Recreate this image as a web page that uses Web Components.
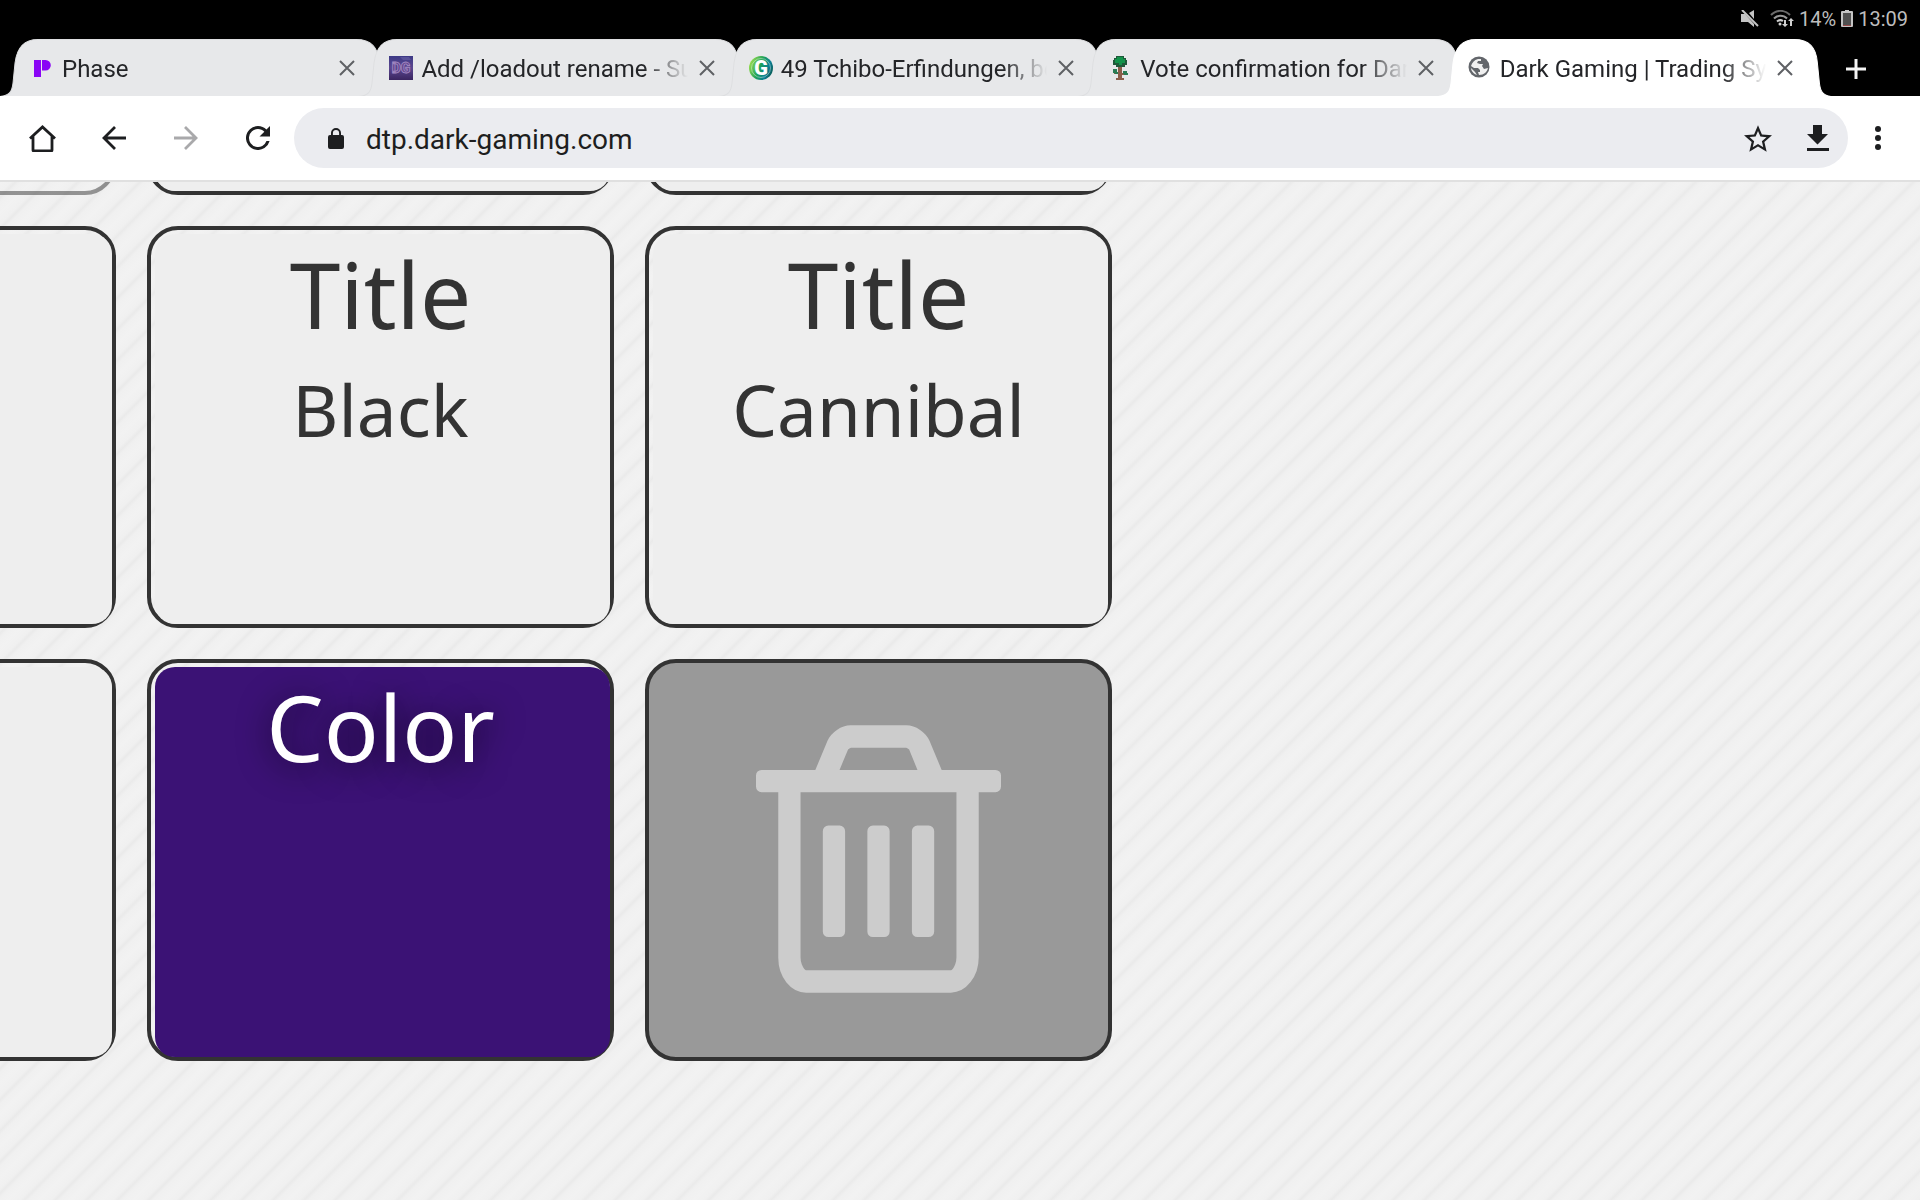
<!DOCTYPE html>
<html lang="en">
<head>
<meta charset="utf-8">
<title>Dark Gaming | Trading System</title>
<style>
  html, body {
    height: 100%;
    margin: 0;
  }

  body {
    display: flex;
    flex-direction: column;
    overflow: hidden;
    font-family: Roboto, "Liberation Sans", sans-serif;
    background: #000;
  }

  trade-board {
    flex: 1;
    min-height: 0;
  }
</style>
</head>
<body>
  <status-bar battery="14%" time="13:09"></status-bar>

  <tab-strip>
    <browser-tab label="Phase" icon="phase"></browser-tab>
    <browser-tab label="Add /loadout rename - Su" icon="dg"></browser-tab>
    <browser-tab label="49 Tchibo-Erfindungen, be" icon="g"></browser-tab>
    <browser-tab label="Vote confirmation for Dar" icon="tree"></browser-tab>
    <browser-tab label="Dark Gaming | Trading Sy" icon="globe" active></browser-tab>
  </tab-strip>

  <address-bar url="dtp.dark-gaming.com"></address-bar>

  <trade-board>
    <trade-card variant="faded"></trade-card>
    <trade-card></trade-card>
    <trade-card></trade-card>
    <trade-card><h2 slot="title">Title</h2><p slot="value">Saffron</p></trade-card>
    <trade-card><h2 slot="title">Title</h2><p slot="value">Black</p></trade-card>
    <trade-card><h2 slot="title">Title</h2><p slot="value">Cannibal</p></trade-card>
    <trade-card></trade-card>
    <trade-card variant="color" style="--fill: #3b1275"><h2 slot="title">Color</h2></trade-card>
    <trash-card></trash-card>
  </trade-board>

<script>
const ICONS = {
  phase: `<svg viewBox="0 0 24 24" width="24" height="24"><path fill="#8a05f5" d="M4 4h7v17H4zM12 4h3.500a5.300 5.300 0 0 1 0 10.600H12z"/></svg>`,
  dg: `<svg viewBox="0 0 24 24" width="24" height="24">
    <defs><linearGradient id="sky" x2="0" y2="1"><stop offset="0" stop-color="#3d3a86"/><stop offset=".5" stop-color="#5b478f"/><stop offset="1" stop-color="#3a2560"/></linearGradient></defs>
    <path fill="url(#sky)" d="M0 0h24v24H0z"/><path fill="#6e68ac" opacity=".5" d="M11 1h9l2 3h-8z"/>
    <text x="12" y="17" text-anchor="middle" font-family="Roboto, sans-serif" font-weight="900" font-size="14" fill="#63468f" stroke="#a58cc4" stroke-width=".8">DG</text></svg>`,
  g: `<svg viewBox="0 0 24 24" width="24" height="24">
    <defs><linearGradient id="ring" x1="0" y1=".3" x2="1" y2=".7"><stop offset="0" stop-color="#9be04e"/><stop offset=".45" stop-color="#1ea05a"/><stop offset=".75" stop-color="#0b7f96"/><stop offset="1" stop-color="#0a5a50"/></linearGradient></defs>
    <circle cx="12" cy="12" r="12" fill="url(#ring)"/><circle cx="12" cy="12" r="9.500" fill="none" stroke="#fff" stroke-opacity=".4"/>
    <text x="12" y="19" text-anchor="middle" font-family="Roboto, sans-serif" font-weight="900" font-size="20" fill="#fff">G</text></svg>`,
  tree: `<svg viewBox="0 0 24 24" width="24" height="24">
    <path fill="#8b5e4a" d="M10 11h4v11h2v2H8v-2h2zM6 16h4v2H6zM14 17h4v2h-4z"/>
    <path fill="#1f5a3a" d="M8 0h8v2h2v2h1v5h-2v2H8V9H5V4h1V2h2z"/><path fill="#13934a" d="M9 1h6v2h2v4h-3v2h-3V7H7V3h2z"/>
    <path fill="#2a7d55" d="M5 13h4v3h1v2H7v-1H5zM15 15h4v2h1v2h-4v-1h-1z"/></svg>`,
  globe: `<svg viewBox="0 0 24 24" width="24" height="24">
    <circle cx="11" cy="11" r="10.500" fill="#63666b"/>
    <path fill="#fff" d="M10 3c-4 1-6 4-7 7l3 2h4l2 2v2h-2l1 3c5 0 8-3 9-7l-4 1-2-3 1-2h-3l-3-1 1-2h3V3zM3 12l4 4 2 3c-3-1-6-4-6-7z" opacity=".9"/></svg>`,
  close: `<svg viewBox="0 0 24 24" width="24" height="24"><path d="M5 4l14 14M19 4L5 18" stroke="#5f6165" stroke-width="2" fill="none"/></svg>`,
  plus: `<svg viewBox="0 0 24 24" width="24" height="24"><path d="M12 2v20M2 12h20" stroke="#f4f4f4" stroke-width="3" fill="none"/></svg>`,
  home: `<svg viewBox="0 0 28 28" width="28" height="28"><path d="M2 14.500L14.500 3 27 14.500M5 12v14q0 1 1 1h17q1 0 1-1V12" stroke="#1d1e20" stroke-width="2.800" fill="none"/></svg>`,
  back: `<svg viewBox="0 0 28 28" width="28" height="28"><path d="M26 14H4M15 3L4 14l11 11" stroke="#1d1e20" stroke-width="2.800" fill="none"/></svg>`,
  forward: `<svg viewBox="0 0 28 28" width="28" height="28"><path d="M2 14h22M13 3l11 11-11 11" stroke="#a9a9ab" stroke-width="2.800" fill="none"/></svg>`,
  reload: `<svg viewBox="0 0 16 16" width="24" height="24"><path fill="#1d1e20" d="M13.650 2.350A7.960 7.960 0 0 0 8 0a8 8 0 1 0 7.730 10h-2.080A6 6 0 1 1 8 2c1.660 0 3.140.690 4.220 1.780L9 7h7V0z"/></svg>`,
  lock: `<svg viewBox="0 0 16 21" width="16" height="21"><path fill="#1d1e20" d="M14 7h-1V5A5 5 0 0 0 3 5v2H2a2 2 0 0 0-2 2v10a2 2 0 0 0 2 2h12a2 2 0 0 0 2-2V9a2 2 0 0 0-2-2zM4.900 7V5a3.100 3.100 0 0 1 6.200 0v2z"/></svg>`,
  star: `<svg viewBox="2 2 20 19" width="28" height="27"><path fill="#1d1e20" d="M22 9.240l-7.190-.620L12 2 9.190 8.630 2 9.240l5.460 4.730L5.820 21 12 17.270 18.180 21l-1.630-7.030zM12 15.400l-3.760 2.270 1-4.280-3.320-2.880 4.380-.380L12 6.100l1.710 4.040 4.380.380-3.320 2.880 1 4.280z"/></svg>`,
  download: `<svg viewBox="0 0 22 26" width="22" height="26"><path fill="#1d1e20" d="M6 0h9v9h6L10.500 19.500 0 9h6zM0 23h22v3H0z"/></svg>`,
  menu: `<svg viewBox="0 0 6 24" width="6" height="24"><g fill="#1d1e20"><circle cx="3" cy="3" r="3"/><circle cx="3" cy="12" r="3"/><circle cx="3" cy="21" r="3"/></g></svg>`,
  mute: `<svg viewBox="0 0 18 18" width="18" height="18"><path fill="#c4c4c4" d="M0 4h4l9 10v3l-6-5H0zM8 3l5-3v9z"/><path d="M1 0l16 16" stroke="#c4c4c4" stroke-width="2"/></svg>`,
  wifi: `<svg viewBox="0 0 24 18" width="24" height="18"><g fill="none" stroke-width="2"><path stroke="#6b6b6b" d="M1 5a13 13 0 0 1 19 0"/><path stroke="#9a9a9a" d="M4 8.500a9 9 0 0 1 13 0"/><path stroke="#d0d0d0" d="M7 11.500a5 5 0 0 1 6-.500"/></g><circle cx="10" cy="14" r="1.500" fill="#d0d0d0"/><path fill="#d0d0d0" d="M14 10h2v4h2l-3 3-3-3h2zM20 16v-5h-2l3-3 3 3h-2v5z"/></svg>`,
  battery: `<svg viewBox="0 0 12 18" width="12" height="18"><path fill="#c4c4c4" d="M4 0h4v1h3q1 0 1 1v14q0 1-1 1H1q-1 0-1-1V2q0-1 1-1h3z"/><path fill="#505050" d="M2 3h8v12H2z"/><path fill="#9a4b4b" d="M2 15h8v1H2z"/></svg>`,
  trash: `<svg viewBox="192 128 1408 1536" width="245" height="268"><path fill="#ccc" d="M704 736v576q0 14-9 23t-23 9h-64q-14 0-23-9t-9-23v-576q0-14 9-23t23-9h64q14 0 23 9t9 23zm256 0v576q0 14-9 23t-23 9h-64q-14 0-23-9t-9-23v-576q0-14 9-23t23-9h64q14 0 23 9t9 23zm256 0v576q0 14-9 23t-23 9h-64q-14 0-23-9t-9-23v-576q0-14 9-23t23-9h64q14 0 23 9t9 23zm128 724v-948h-896v948q0 22 7 40.500t14.500 27 10.500 8.500h832q3 0 10.500-8.500t14.500-27 7-40.500zm-672-1076h448l-48-117q-7-9-17-11h-317q-10 2-17 11zm928 32v64q0 14-9 23t-23 9h-96v948q0 83-47 143.500t-113 60.500h-832q-66 0-113-58.500t-47-141.500v-952h-96q-14 0-23-9t-9-23v-64q0-14 9-23t23-9h309l70-167q15-37 54-63t79-26h320q40 0 79 26t54 63l70 167h309q14 0 23 9t9 23z"/></svg>`,
};

const BUTTON_STYLE = `
  button {
    display: flex;
    align-items: center;
    justify-content: center;
    padding: 0;
    border: none;
    background: none;
    font: inherit;
    color: inherit;
    cursor: pointer;
  }
  svg { display: block; flex: none; }
`;

class StatusBar extends HTMLElement {
  connectedCallback() {
    this.attachShadow({ mode: "open" }).innerHTML = `
      <style>
        :host {
          display: flex;
          align-items: center;
          justify-content: flex-end;
          gap: 5px;
          height: 38px;
          padding: 0 12px 1px 0;
          font-size: 20px;
          color: #bdbdbd;
          background: #000;
        }
        svg { display: block; }
        .mute { margin-right: 6px; }
      </style>
      <span class="mute">${ICONS.mute}</span>
      ${ICONS.wifi}
      <span>${this.getAttribute("battery")}</span>
      ${ICONS.battery}
      <time>${this.getAttribute("time")}</time>
    `;
  }
}

class BrowserTab extends HTMLElement {
  connectedCallback() {
    const active = this.hasAttribute("active");
    const label = this.getAttribute("label");

    this.attachShadow({ mode: "open" }).innerHTML = `
      <style>
        ${BUTTON_STYLE}
        :host {
          position: relative;
          display: flex;
          align-items: center;
          flex: 1;
          min-width: 0;
          height: 57px;
          padding: 2px 16px 0 13px;
          box-sizing: border-box;
          color: #242528;
          --tab: #e7e8ea;
          --edge: #dedfe1;
        }
        :host([active]) {
          --tab: #fff;
          --edge: #fff;
        }
        /* the shape spills over the neighbours on both sides */
        .shape {
          position: absolute;
          top: 0;
          left: -17px;
          width: calc(100% + 34px);
          height: 100%;
        }
        .shape path { fill: var(--tab); stroke: var(--edge); }
        .select {
          position: relative;
          flex: 1;
          min-width: 0;
          height: 100%;
          justify-content: flex-start;
          gap: 8px;
        }
        .select svg { margin-bottom: 2px; }
        .label {
          flex: 1;
          overflow: hidden;
          text-align: left;
          white-space: nowrap;
          font-size: 24px;
          line-height: 32px;
          mask-image: linear-gradient(to right, #000 calc(100% - 44px), transparent);
        }
        .close {
          position: relative;
          width: 26px;
          height: 48px;
          margin-left: 6px;
        }
      </style>
      <svg class="shape" viewBox="0 0 393 57" preserveAspectRatio="none">
        <path d="M0 57.500C9 57 12 53 13 44L15 24C17 8 24 .500 38 .500H356C370 .500 378 8 379 24L381 44C382 53 385 57 393 57.500"/>
      </svg>
      <button class="select" role="tab" aria-selected="${active}">
        ${ICONS[this.getAttribute("icon")]}
        <span class="label">${label}</span>
      </button>
      <button class="close" aria-label="Close tab">${ICONS.close}</button>
    `;
  }
}

class TabStrip extends HTMLElement {
  connectedCallback() {
    this.attachShadow({ mode: "open" }).innerHTML = `
      <style>
        ${BUTTON_STYLE}
        :host {
          display: flex;
          padding: 0 22px 0 17px;
          background: #000;
        }
        .tabs { display: flex; flex: 1; min-width: 0; }
        .new { width: 84px; height: 60px; margin-bottom: -3px; }
      </style>
      <div class="tabs" role="tablist"><slot></slot></div>
      <button class="new" aria-label="New tab">${ICONS.plus}</button>
    `;
  }
}

class AddressBar extends HTMLElement {
  connectedCallback() {
    this.attachShadow({ mode: "open" }).innerHTML = `
      <style>
        ${BUTTON_STYLE}
        :host {
          position: relative;
          display: flex;
          align-items: center;
          height: 84px;
          padding: 0 12px 0 6px;
          border-bottom: 2px solid #e0e0e0;
          background: #fff;
        }
        .nav { width: 72px; height: 60px; }
        .action { width: 60px; height: 60px; }
        .omnibox {
          display: flex;
          align-items: center;
          flex: 1;
          min-width: 0;
          height: 60px;
          padding-left: 34px;
          border-radius: 30px;
          background: #ebecf0;
        }
        label { display: flex; align-items: center; flex: 1; gap: 22px; }
        input {
          flex: 1;
          height: 40px;
          padding: 2px 0 0;
          border: none;
          outline: none;
          background: none;
          font: 28px Roboto, "Liberation Sans", sans-serif;
          color: #1d1e20;
        }
      </style>
      <button class="nav" aria-label="Home">${ICONS.home}</button>
      <button class="nav" aria-label="Back">${ICONS.back}</button>
      <button class="nav" aria-label="Forward">${ICONS.forward}</button>
      <button class="nav" aria-label="Reload">${ICONS.reload}</button>
      <div class="omnibox">
        <label>${ICONS.lock}<input type="text" aria-label="Address" value="${this.getAttribute("url")}"></label>
        <button class="action" aria-label="Bookmark">${ICONS.star}</button>
        <button class="action" aria-label="Download">${ICONS.download}</button>
      </div>
      <button class="action" aria-label="Menu">${ICONS.menu}</button>
    `;
  }
}

class TradeCard extends HTMLElement {
  connectedCallback() {
    this.attachShadow({ mode: "open" }).innerHTML = `
      <style>
        :host {
          display: block;
          box-sizing: border-box;
          padding: 4px 0 0 4px;
          border: 4px solid #333;
          border-radius: 31px;
          text-align: center;
          color: #333;
        }
        :host([variant="faded"]) { opacity: 0.5; --fill: transparent; }
        :host([variant="color"]) { color: #fff; text-shadow: 0 4px 32px rgba(0, 0, 0, 0.7); }
        .fill {
          height: 100%;
          padding: 6px 4px 0 0;
          box-sizing: border-box;
          border-radius: 20px;
          background: var(--fill, #eee);
        }
        ::slotted(h2) {
          margin: 0 0 18px;
          font-size: 91px;
          font-weight: 400;
          line-height: 108px;
        }
        ::slotted(p) {
          margin: 0;
          font-size: 71px;
          line-height: 88px;
        }
      </style>
      <div class="fill">
        <slot name="title"></slot>
        <slot name="value"></slot>
      </div>
    `;
  }
}

class TrashCard extends HTMLElement {
  connectedCallback() {
    this.attachShadow({ mode: "open" }).innerHTML = `
      <style>
        ${BUTTON_STYLE}
        :host { display: flex; }
        button {
          flex: 1;
          padding-bottom: 2px;
          border: 4px solid #333;
          border-radius: 31px;
          background: #999;
        }
      </style>
      <button aria-label="Remove item">${ICONS.trash}</button>
    `;
  }
}

class TradeBoard extends HTMLElement {
  connectedCallback() {
    this.attachShadow({ mode: "open" }).innerHTML = `
      <style>
        :host {
          --scroll-x: 382px;
          --scroll-y: 420px;
          display: block;
          overflow: auto;
          scrollbar-width: none;
          font-family: "Noto Sans", "Open Sans", sans-serif;
          background: repeating-linear-gradient(135deg, #f2f2f2 0, #f0f0f0 8px, #eaeaea 11px, #f0f0f0 14px, #f2f2f2 22px);
        }
        .grid {
          display: grid;
          grid-template-columns: repeat(3, 467px);
          grid-auto-rows: 402px;
          gap: 31px;
          width: calc(100% + var(--scroll-x));
          min-height: calc(100% + var(--scroll-y));
          padding: 31px;
          box-sizing: border-box;
        }
      </style>
      <div class="grid"><slot></slot></div>
    `;
    // the board opens on its last rows and columns
    this.scrollTo(382, 420);
  }
}

customElements.define("status-bar", StatusBar);
customElements.define("browser-tab", BrowserTab);
customElements.define("tab-strip", TabStrip);
customElements.define("address-bar", AddressBar);
customElements.define("trade-card", TradeCard);
customElements.define("trash-card", TrashCard);
customElements.define("trade-board", TradeBoard);
</script>
</body>
</html>
